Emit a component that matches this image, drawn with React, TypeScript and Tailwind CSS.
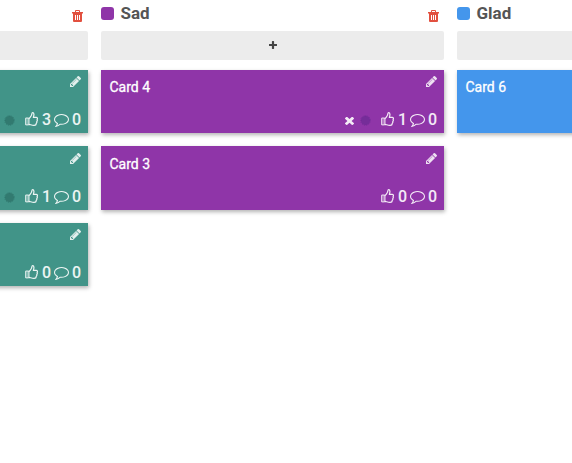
import React from "react";

type IconProps = { d: string; box: string; className: string };

function Glyph({ d, box, className }: IconProps) {
  return (
    <svg viewBox={box} preserveAspectRatio="none" className={className} fill="currentColor" aria-hidden="true">
      <path d={d} fillRule="evenodd" />
    </svg>
  );
}

const PENCIL =
  "M491 1536l91-91-235-235-91 91v107h128v128h107zm523-928q0-22-22-22-10 0-17 7l-542 542q-7 7-7 17 0 22 22 22 10 0 17-7l542-542q7-7 7-17zm-54-192l416 416-832 832h-416v-416zm683 96q0 53-37 90l-166 166-416-416 166-165q36-38 90-38 53 0 91 38l235 234q37 39 37 91z";
const TIMES =
  "M1490 1322q0 40-28 68l-136 136q-28 28-68 28t-68-28l-294-294-294 294q-28 28-68 28t-68-28l-136-136q-28-28-28-68t28-68l294-294-294-294q-28-28-28-68t28-68l136-136q28-28 68-28t68 28l294 294 294-294q28-28 68-28t68 28l136 136q28 28 28 68t-28 68l-294 294 294 294q28 28 28 68z";
const PLUS =
  "M1600 736v192q0 40-28 68t-68 28h-416v416q0 40-28 68t-68 28h-192q-40 0-68-28t-28-68v-416h-416q-40 0-68-28t-28-68v-192q0-40 28-68t68-28h416v-416q0-40 28-68t68-28h192q40 0 68 28t28 68v416h416q40 0 68 28t28 68z";
const COMMENT =
  "M896 384q-204 0-381.500 69.500t-282 187.500-104.500 255q0 112 71.500 213.500t201.500 175.500l87 50-27 96q-24 91-70 172 152-63 275-171l43-38 57 6q69 8 130 8 204 0 381.500-69.500t282-187.500 104.500-255-104.500-255-282-187.500-381.500-69.500zm896 512q0 174-120 321.500t-326 233-450 85.500q-70 0-145-8-198 175-460 242-49 14-114 22h-5q-15 0-27-10.500t-16-27.500v-1q-3-4-.5-12t2-10 4.500-9.500l6-9 7-8.500 8-9q7-8 31-34.500t34.500-38 31-39.500 32.500-51 27-59 26-76q-157-89-247.500-220t-90.500-281q0-174 120-321.500t326-233 450-85.500 450 85.500 326 233 120 321.500z";
// Solid bin with three slots and a looped handle on the lid.
const TRASH =
  "M0 2h3V1q0-1 1-1h3q1 0 1 1v1h3v1.500h-1V11q0 1-1 1H2q-1 0-1-1V3.500H0zM4 2h3V1H4zM3 5v5h1V5zM5 5v5h1V5zM7 5v5h1V5z";

function Thumb() {
  return (
    <svg viewBox="0 0 13 14" className="mr-[4px] h-[14px] w-[13px] -translate-y-px" fill="none" aria-hidden="true">
      <path
        d="M3.700 6.700C5.100 6 6 4.300 6.500 3.300C6.900 2.400 6.700 .7 7.600 .7C9.400 .7 9.100 3.400 8.300 5.400H11.200C12.600 5.400 12.700 6.700 12.100 7.400C12.500 8.200 12.300 9 11.800 9.500C12 10.300 11.700 11 11.200 11.400C11.200 12.700 10.300 13.300 9 13.300C6.500 13.300 5.600 12.500 3.700 12.300"
        stroke="currentColor"
        strokeWidth="1.200"
        strokeLinejoin="round"
      />
      <path
        d="M1 6H3.300Q4 6 4 6.700V12.200Q4 12.900 3.300 12.900H1Q.3 12.900 .3 12.200V6.700Q.3 6 1 6Z"
        fill="currentColor"
        fillOpacity="0.4"
        stroke="currentColor"
        strokeWidth="0.900"
      />
    </svg>
  );
}

type CardData = { title: string; likes?: number; voted?: boolean; clear?: boolean; size: string };

function Card({ card, color, dot }: { card: CardData; color: string; dot: string }) {
  return (
    <article
      className={`flex flex-col justify-between pl-[8.500px] pr-[7px] pb-[3px] text-white shadow-[1px_2px_4px_rgba(0,0,0,0.3)] ${card.size} ${color}`}
    >
      <div className="flex items-start justify-between">
        <h3 className="pt-px text-[14px] font-normal leading-5 [-webkit-text-stroke:0.300px_white]">{card.title}</h3>
        <Glyph d={PENCIL} box="128 149 1515 1515" className="h-[11px] w-[11px] opacity-85" />
      </div>
      {card.likes !== undefined && (
        <div className="flex h-5 items-center justify-end text-[16px] font-medium leading-5 text-white/90">
          {card.clear && <Glyph d={TIMES} box="302 238 1188 1316" className="mr-[6px] h-[9px] w-[9px]" />}
          {card.voted && (
            <svg viewBox="0 0 11 11" className={`mr-[10px] h-[11px] w-[11px] ${dot}`} aria-hidden="true">
              <circle cx="5.500" cy="5.500" r="4.500" fill="currentColor" />
              <circle cx="5.500" cy="5.500" r="4.800" fill="none" stroke="currentColor" strokeWidth="1" strokeDasharray="1 1" />
            </svg>
          )}
          <Thumb />
          <span className="w-[9px] text-center">{card.likes}</span>
          <Glyph d={COMMENT} box="0 256 1792 1536" className="mx-[3px] mt-px h-[13px] w-[15px]" />
          <span className="w-[9px] text-center">0</span>
        </div>
      )}
    </article>
  );
}

type ColumnProps = { title: string; color: string; dot: string; width: string; cards: CardData[]; plus?: boolean };

function Column({ title, color, dot, width, cards, plus }: ColumnProps) {
  return (
    <section className={`shrink-0 ${width}`}>
      <header className="flex h-[31px] items-start justify-between pr-[5px]">
        <div className="flex items-start">
          <span className={`mt-[7px] h-[13px] w-[13px] rounded-[3px] ${color}`} />
          <h2 className="ml-[6.500px] mt-px text-[17px] font-bold leading-6 text-[#555]">{title}</h2>
        </div>
        <Glyph d={TRASH} box="0 0 11 12" className="mt-[10px] h-3 w-[11px] text-[#e2503f]" />
      </header>
      <button className="flex h-[29px] w-full items-center justify-center rounded-[2px] bg-[#ececec] text-[#444]">
        {plus && <Glyph d={PLUS} box="192 128 1408 1408" className="mb-px h-2 w-2" />}
      </button>
      <div className="mt-[10px] flex flex-col gap-[13px]">
        {cards.map((card, i) => (
          <Card key={i} card={card} color={color} dot={dot} />
        ))}
      </div>
    </section>
  );
}

export default function App() {
  return (
    <main className="flex h-[463px] w-[572px] justify-start gap-[13px] overflow-hidden bg-white font-['Roboto',sans-serif]">
      <div className="flex w-[88px] shrink-0 justify-end">
        <Column
          title=""
          color="bg-[#419488]"
          dot="text-[#327a70]"
          width="w-[343px]"
          cards={[
            { title: "", likes: 3, voted: true, size: "h-[63px] pt-[6px]" },
            { title: "", likes: 1, voted: true, size: "h-[64px] pt-[7px]" },
            { title: "", likes: 0, size: "h-[63px] pt-[6px]" },
          ]}
        />
      </div>
      <Column
        title="Sad"
        color="bg-[#8f35a8]"
        dot="text-[#752d99]"
        width="w-[343px]"
        plus
        cards={[
          { title: "Card 4", likes: 1, voted: true, clear: true, size: "h-[63px] pt-[6px]" },
          { title: "Card 3", likes: 0, size: "h-[64px] pt-[7px]" },
        ]}
      />
      <Column
        title="Glad"
        color="bg-[#4496ec]"
        dot="text-[#327bc8]"
        width="w-[343px]"
        cards={[{ title: "Card 6", size: "h-[63px] pt-[6px]" }]}
      />
    </main>
  );
}
